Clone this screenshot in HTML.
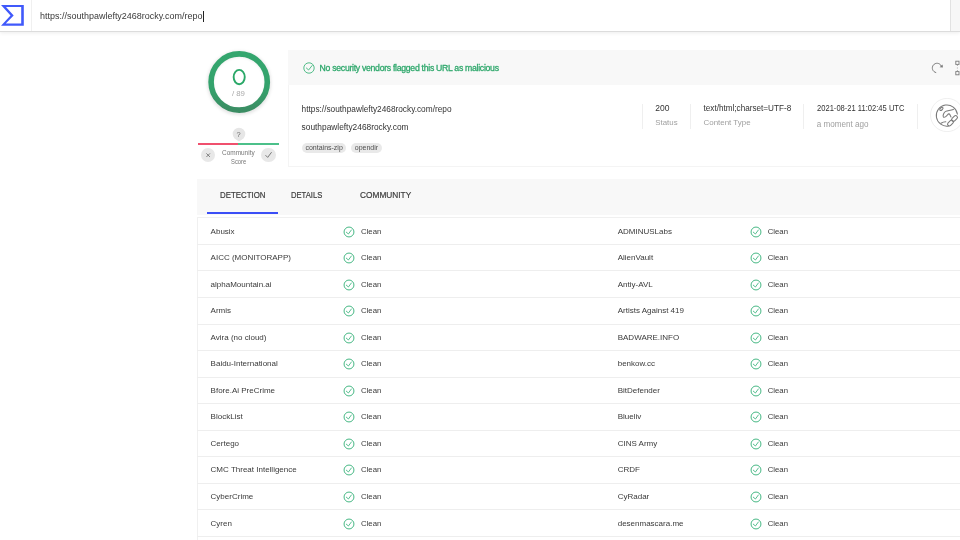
<!DOCTYPE html><html><head><meta charset="utf-8"><style>
html,body{margin:0;padding:0;width:960px;height:540px;overflow:hidden;background:#fff;}
body{position:relative;font-family:"Liberation Sans",sans-serif;}
#w{position:absolute;left:0;top:0;width:960px;height:540px;will-change:transform;background:#fff;}
.t{position:absolute;white-space:nowrap;}
.a{position:absolute;}
</style></head><body><div id="w">
<div class="a" style="left:0;top:0;width:960px;height:31px;background:#fff;border-bottom:1px solid #dcdcdc;box-shadow:0 1px 4px rgba(0,0,0,0.08);"></div>
<div class="a" style="left:31px;top:0;width:1px;height:31px;background:#f0f0f0;"></div>
<div class="a" style="left:950px;top:0;width:1px;height:31px;background:#e2e2e2;"></div>
<div class="a" style="left:951px;top:0;width:9px;height:31px;background:#f7f7f7;"></div>
<svg class="a" style="left:0;top:0" width="32" height="31" viewBox="0 0 32 31"><path fill="#4059fb" fill-rule="evenodd" d="M1 4.9 L23.8 4.9 L23.8 25.7 L1 25.7 L10.5 15.4 Z M6 7.1 L21.2 7.1 L21.2 23.5 L5.8 23.5 L13.7 15.4 Z"/></svg>
<div class="t" style="left:40.10px;top:12.00px;font-size:8.98px;line-height:8.98px;color:#3a3a3a;">https://southpawlefty2468rocky.com/repo</div>
<div class="a" style="left:203px;top:11px;width:1px;height:11px;background:#222;"></div>
<svg class="a" style="left:198.5px;top:41.5px" width="80" height="80" viewBox="0 0 80 80"><defs><linearGradient id="rg" x1="0" y1="0" x2="0" y2="1"><stop offset="0" stop-color="#34a66e"/><stop offset="0.6" stop-color="#34a26c"/><stop offset="1" stop-color="#3b8d63"/></linearGradient><filter id="sh" x="-20%" y="-20%" width="140%" height="140%"><feGaussianBlur stdDeviation="1.5"/></filter></defs><circle cx="40.2" cy="41" r="29" stroke="rgba(0,0,0,0.10)" stroke-width="6" fill="none" filter="url(#sh)"/><circle cx="40.2" cy="40" r="28.1" stroke="url(#rg)" stroke-width="5.6" fill="none"/><ellipse cx="40.2" cy="35.05" rx="5.55" ry="7.2" stroke="#2aa868" stroke-width="1.9" fill="none"/></svg>
<div class="t" style="left:138.40px;width:200px;text-align:center;top:90.00px;font-size:7.8px;line-height:7.8px;color:#aaaaaa;">/ 89</div>
<svg class="a" style="left:228.6px;top:124.1px" width="20" height="20" viewBox="0 0 20 20"><path d="M5.5 14.4 A6.3 6.3 0 1 1 14.5 14.4 L10 17.4 Z" fill="#e6e6e6"/></svg>
<div class="t" style="left:138.60px;width:200px;text-align:center;top:131.00px;font-size:7.5px;line-height:7.5px;color:#6a6a6a;">?</div>
<div class="a" style="left:197.8px;top:143.1px;width:40.3px;height:1.75px;background:#f0506e;"></div>
<div class="a" style="left:238.1px;top:143.1px;width:40.8px;height:1.75px;background:#4cc08a;"></div>
<div class="a" style="left:200.9px;top:148px;width:14.4px;height:14.4px;border-radius:50%;background:#e8e8e8;"></div>
<div class="a" style="left:261.4px;top:148px;width:14.4px;height:14.4px;border-radius:50%;background:#e8e8e8;"></div>
<svg class="a" style="left:200.9px;top:148px" width="14.4" height="14.4" viewBox="0 0 14.4 14.4"><path d="M5.4 5.4 L9 9 M9 5.4 L5.4 9" stroke="#666" stroke-width="0.8" fill="none"/></svg>
<svg class="a" style="left:261.4px;top:148px" width="14.4" height="14.4" viewBox="0 0 14.4 14.4"><path d="M4.5 7.2 L6.7 9.4 L10.6 4.2" stroke="#666" stroke-width="0.85" fill="none"/></svg>
<div class="t" style="left:222.00px;top:150.00px;font-size:6.6px;line-height:6.6px;color:#777;transform:scaleX(0.9798);transform-origin:0 0;">Community</div>
<div class="t" style="left:230.80px;top:159.00px;font-size:6.6px;line-height:6.6px;color:#777;transform:scaleX(0.8816);transform-origin:0 0;">Score</div>
<div class="a" style="left:288px;top:50px;width:680px;height:115px;background:#fff;border:1px solid #f4f4f4;"></div>
<div class="a" style="left:288px;top:50px;width:680px;height:34.5px;background:#f8f8f8;"></div>
<svg class="a" style="left:302.5px;top:62px" width="12" height="12" viewBox="0 0 12 12"><circle cx="6" cy="6" r="5.2" stroke="#3fb57c" stroke-width="0.9" fill="none"/><path d="M3.1 5.75 L5.6 8 L9.4 3.2" stroke="#3fb57c" stroke-width="0.9" fill="none"/></svg>
<div class="t" style="left:319.60px;top:64.00px;font-size:8.7px;line-height:8.7px;color:#2fa86c;letter-spacing:-0.29px;-webkit-text-stroke:0.3px #2fa86c">No security vendors flagged this URL as malicious</div>
<div class="t" style="left:301.60px;top:105.00px;font-size:8.29px;line-height:8.29px;color:#333;">https://southpawlefty2468rocky.com/repo</div>
<div class="t" style="left:301.60px;top:123.00px;font-size:8.35px;line-height:8.35px;color:#333;">southpawlefty2468rocky.com</div>
<div class="a" style="left:301.6px;top:142.8px;width:44.3px;height:9.8px;border-radius:5px;background:#e9e9e9;"></div>
<div class="a" style="left:351px;top:142.8px;width:30.9px;height:9.8px;border-radius:5px;background:#e9e9e9;"></div>
<div class="t" style="left:224.15px;width:200px;text-align:center;top:144.00px;font-size:7.0px;line-height:7.0px;color:#505050;">contains-zip</div>
<div class="t" style="left:266.45px;width:200px;text-align:center;top:144.00px;font-size:7.0px;line-height:7.0px;color:#505050;">opendir</div>
<div class="a" style="left:642.0px;top:104px;width:1px;height:24.5px;background:#efefef;"></div>
<div class="a" style="left:690.0px;top:104px;width:1px;height:24.5px;background:#efefef;"></div>
<div class="a" style="left:803.0px;top:104px;width:1px;height:24.5px;background:#efefef;"></div>
<div class="a" style="left:917.0px;top:104px;width:1px;height:24.5px;background:#efefef;"></div>
<div class="t" style="left:655.30px;top:104.00px;font-size:8.5px;line-height:8.5px;color:#333;">200</div>
<div class="t" style="left:655.30px;top:119.00px;font-size:7.87px;line-height:7.87px;color:#a0a0a0;">Status</div>
<div class="t" style="left:703.50px;top:105.00px;font-size:8.16px;line-height:8.16px;color:#333;">text/html;charset=UTF-8</div>
<div class="t" style="left:703.50px;top:119.00px;font-size:7.94px;line-height:7.94px;color:#a0a0a0;">Content Type</div>
<div class="t" style="left:816.70px;top:104.00px;font-size:8.8px;line-height:8.8px;color:#333;transform:scaleX(0.8613);transform-origin:0 0;">2021-08-21 11:02:45 UTC</div>
<div class="t" style="left:816.70px;top:121.00px;font-size:8.13px;line-height:8.13px;color:#a0a0a0;">a moment ago</div>
<svg class="a" style="left:926px;top:56px" width="34" height="26" viewBox="0 0 34 26"><path d="M10.2 16.6 A4.7 4.7 0 1 1 15.3 10" stroke="#7a7a7a" stroke-width="1" fill="none"/><path d="M13.6 11.2 L16.9 11.6 L16.6 8.4 Z" fill="#7a7a7a"/><rect x="29.8" y="5.2" width="3.2" height="3.2" stroke="#7a7a7a" stroke-width="0.9" fill="none"/><rect x="29.8" y="15.6" width="3.2" height="3.2" stroke="#7a7a7a" stroke-width="0.9" fill="none"/><path d="M31.4 9 V15" stroke="#999" stroke-width="0.8" stroke-dasharray="1 1.5"/></svg>
<svg class="a" style="left:930px;top:97.5px" width="34" height="34" viewBox="0 0 34 34"><circle cx="17.1" cy="17" r="16.6" stroke="#ebebeb" stroke-width="0.8" fill="#fff"/><g stroke="#7a7a7a" stroke-width="1.05" fill="none" stroke-linecap="round"><path d="M27.4 16.1 A10.6 10.6 0 1 0 18.7 28"/><path d="M23.4 11.4 C20 12.6 17.5 12.4 15.6 13.4 C13.6 14.6 12.6 17.8 13.4 19 C14.4 19.8 16.4 18.6 17.6 16.8 C18.4 15.6 19.4 15.6 19.8 16.6 L21 19"/><ellipse cx="11.4" cy="10.9" rx="1.9" ry="1.1" transform="rotate(-40 11.4 10.9)"/><path d="M11 25.3 C12.5 24.3 14 23.8 15.8 23.8"/><rect x="17.1" y="23.2" width="6.8" height="3.6" rx="1.8" transform="rotate(-45 20.5 25)"/><rect x="21.1" y="18.7" width="6.8" height="3.6" rx="1.8" transform="rotate(-45 24.5 20.5)"/></g></svg>
<div class="a" style="left:197.3px;top:178.5px;width:780px;height:36.3px;background:#f8f8f8;"></div>
<div class="t" style="left:219.75px;top:191.00px;font-size:9.1px;line-height:9.1px;color:#3c3c3c;-webkit-text-stroke:0.2px #3c3c3c;transform:scaleX(0.8654);transform-origin:0 0;">DETECTION</div>
<div class="t" style="left:290.50px;top:191.00px;font-size:9.1px;line-height:9.1px;color:#3c3c3c;-webkit-text-stroke:0.2px #3c3c3c;transform:scaleX(0.8388);transform-origin:0 0;">DETAILS</div>
<div class="t" style="left:359.75px;top:191.00px;font-size:9.1px;line-height:9.1px;color:#3c3c3c;-webkit-text-stroke:0.2px #3c3c3c;transform:scaleX(0.9134);transform-origin:0 0;">COMMUNITY</div>
<div class="a" style="left:206.75px;top:211.75px;width:71.25px;height:2.5px;background:#3b4ef6;"></div>
<div class="a" style="left:197.3px;top:217.20px;width:780px;height:330px;background:#fff;border-left:1px solid #f0f0f0;border-top:1px solid #f0f0f0;"></div>
<div class="a" style="left:197.3px;top:243.90px;width:780px;height:1px;background:#eeeeee;"></div>
<div class="t" style="left:210.60px;top:228.00px;font-size:8.0px;line-height:8.0px;color:#3a3a3a;">Abusix</div>
<svg class="a" style="left:343.40px;top:225.50px" width="12" height="12" viewBox="0 0 12 12"><circle cx="6" cy="6" r="4.95" stroke="#46b884" stroke-width="1" fill="none"/><path d="M3.0 5.9 L5.4 8.0 L8.6 3.7" stroke="#46b884" stroke-width="0.9" fill="none"/></svg>
<div class="t" style="left:361.00px;top:228.00px;font-size:7.78px;line-height:7.78px;color:#3a3a3a;">Clean</div>
<div class="t" style="left:617.70px;top:228.00px;font-size:8.0px;line-height:8.0px;color:#3a3a3a;">ADMINUSLabs</div>
<svg class="a" style="left:750.25px;top:225.50px" width="12" height="12" viewBox="0 0 12 12"><circle cx="6" cy="6" r="4.95" stroke="#46b884" stroke-width="1" fill="none"/><path d="M3.0 5.9 L5.4 8.0 L8.6 3.7" stroke="#46b884" stroke-width="0.9" fill="none"/></svg>
<div class="t" style="left:767.70px;top:228.00px;font-size:7.78px;line-height:7.78px;color:#3a3a3a;">Clean</div>
<div class="a" style="left:197.3px;top:270.45px;width:780px;height:1px;background:#eeeeee;"></div>
<div class="t" style="left:210.60px;top:254.00px;font-size:8.0px;line-height:8.0px;color:#3a3a3a;">AICC (MONITORAPP)</div>
<svg class="a" style="left:343.40px;top:252.05px" width="12" height="12" viewBox="0 0 12 12"><circle cx="6" cy="6" r="4.95" stroke="#46b884" stroke-width="1" fill="none"/><path d="M3.0 5.9 L5.4 8.0 L8.6 3.7" stroke="#46b884" stroke-width="0.9" fill="none"/></svg>
<div class="t" style="left:361.00px;top:254.00px;font-size:7.78px;line-height:7.78px;color:#3a3a3a;">Clean</div>
<div class="t" style="left:617.70px;top:254.00px;font-size:8.0px;line-height:8.0px;color:#3a3a3a;">AlienVault</div>
<svg class="a" style="left:750.25px;top:252.05px" width="12" height="12" viewBox="0 0 12 12"><circle cx="6" cy="6" r="4.95" stroke="#46b884" stroke-width="1" fill="none"/><path d="M3.0 5.9 L5.4 8.0 L8.6 3.7" stroke="#46b884" stroke-width="0.9" fill="none"/></svg>
<div class="t" style="left:767.70px;top:254.00px;font-size:7.78px;line-height:7.78px;color:#3a3a3a;">Clean</div>
<div class="a" style="left:197.3px;top:297.00px;width:780px;height:1px;background:#eeeeee;"></div>
<div class="t" style="left:210.60px;top:281.00px;font-size:8.0px;line-height:8.0px;color:#3a3a3a;">alphaMountain.ai</div>
<svg class="a" style="left:343.40px;top:278.60px" width="12" height="12" viewBox="0 0 12 12"><circle cx="6" cy="6" r="4.95" stroke="#46b884" stroke-width="1" fill="none"/><path d="M3.0 5.9 L5.4 8.0 L8.6 3.7" stroke="#46b884" stroke-width="0.9" fill="none"/></svg>
<div class="t" style="left:361.00px;top:281.00px;font-size:7.78px;line-height:7.78px;color:#3a3a3a;">Clean</div>
<div class="t" style="left:617.70px;top:281.00px;font-size:8.0px;line-height:8.0px;color:#3a3a3a;">Antiy-AVL</div>
<svg class="a" style="left:750.25px;top:278.60px" width="12" height="12" viewBox="0 0 12 12"><circle cx="6" cy="6" r="4.95" stroke="#46b884" stroke-width="1" fill="none"/><path d="M3.0 5.9 L5.4 8.0 L8.6 3.7" stroke="#46b884" stroke-width="0.9" fill="none"/></svg>
<div class="t" style="left:767.70px;top:281.00px;font-size:7.78px;line-height:7.78px;color:#3a3a3a;">Clean</div>
<div class="a" style="left:197.3px;top:323.55px;width:780px;height:1px;background:#eeeeee;"></div>
<div class="t" style="left:210.60px;top:307.00px;font-size:8.0px;line-height:8.0px;color:#3a3a3a;">Armis</div>
<svg class="a" style="left:343.40px;top:305.15px" width="12" height="12" viewBox="0 0 12 12"><circle cx="6" cy="6" r="4.95" stroke="#46b884" stroke-width="1" fill="none"/><path d="M3.0 5.9 L5.4 8.0 L8.6 3.7" stroke="#46b884" stroke-width="0.9" fill="none"/></svg>
<div class="t" style="left:361.00px;top:307.00px;font-size:7.78px;line-height:7.78px;color:#3a3a3a;">Clean</div>
<div class="t" style="left:617.70px;top:307.00px;font-size:8.0px;line-height:8.0px;color:#3a3a3a;">Artists Against 419</div>
<svg class="a" style="left:750.25px;top:305.15px" width="12" height="12" viewBox="0 0 12 12"><circle cx="6" cy="6" r="4.95" stroke="#46b884" stroke-width="1" fill="none"/><path d="M3.0 5.9 L5.4 8.0 L8.6 3.7" stroke="#46b884" stroke-width="0.9" fill="none"/></svg>
<div class="t" style="left:767.70px;top:307.00px;font-size:7.78px;line-height:7.78px;color:#3a3a3a;">Clean</div>
<div class="a" style="left:197.3px;top:350.10px;width:780px;height:1px;background:#eeeeee;"></div>
<div class="t" style="left:210.60px;top:334.00px;font-size:8.0px;line-height:8.0px;color:#3a3a3a;">Avira (no cloud)</div>
<svg class="a" style="left:343.40px;top:331.70px" width="12" height="12" viewBox="0 0 12 12"><circle cx="6" cy="6" r="4.95" stroke="#46b884" stroke-width="1" fill="none"/><path d="M3.0 5.9 L5.4 8.0 L8.6 3.7" stroke="#46b884" stroke-width="0.9" fill="none"/></svg>
<div class="t" style="left:361.00px;top:334.00px;font-size:7.78px;line-height:7.78px;color:#3a3a3a;">Clean</div>
<div class="t" style="left:617.70px;top:334.00px;font-size:8.0px;line-height:8.0px;color:#3a3a3a;">BADWARE.INFO</div>
<svg class="a" style="left:750.25px;top:331.70px" width="12" height="12" viewBox="0 0 12 12"><circle cx="6" cy="6" r="4.95" stroke="#46b884" stroke-width="1" fill="none"/><path d="M3.0 5.9 L5.4 8.0 L8.6 3.7" stroke="#46b884" stroke-width="0.9" fill="none"/></svg>
<div class="t" style="left:767.70px;top:334.00px;font-size:7.78px;line-height:7.78px;color:#3a3a3a;">Clean</div>
<div class="a" style="left:197.3px;top:376.65px;width:780px;height:1px;background:#eeeeee;"></div>
<div class="t" style="left:210.60px;top:360.00px;font-size:8.0px;line-height:8.0px;color:#3a3a3a;">Baidu-International</div>
<svg class="a" style="left:343.40px;top:358.25px" width="12" height="12" viewBox="0 0 12 12"><circle cx="6" cy="6" r="4.95" stroke="#46b884" stroke-width="1" fill="none"/><path d="M3.0 5.9 L5.4 8.0 L8.6 3.7" stroke="#46b884" stroke-width="0.9" fill="none"/></svg>
<div class="t" style="left:361.00px;top:360.00px;font-size:7.78px;line-height:7.78px;color:#3a3a3a;">Clean</div>
<div class="t" style="left:617.70px;top:360.00px;font-size:8.0px;line-height:8.0px;color:#3a3a3a;">benkow.cc</div>
<svg class="a" style="left:750.25px;top:358.25px" width="12" height="12" viewBox="0 0 12 12"><circle cx="6" cy="6" r="4.95" stroke="#46b884" stroke-width="1" fill="none"/><path d="M3.0 5.9 L5.4 8.0 L8.6 3.7" stroke="#46b884" stroke-width="0.9" fill="none"/></svg>
<div class="t" style="left:767.70px;top:360.00px;font-size:7.78px;line-height:7.78px;color:#3a3a3a;">Clean</div>
<div class="a" style="left:197.3px;top:403.20px;width:780px;height:1px;background:#eeeeee;"></div>
<div class="t" style="left:210.60px;top:387.00px;font-size:8.0px;line-height:8.0px;color:#3a3a3a;">Bfore.Ai PreCrime</div>
<svg class="a" style="left:343.40px;top:384.80px" width="12" height="12" viewBox="0 0 12 12"><circle cx="6" cy="6" r="4.95" stroke="#46b884" stroke-width="1" fill="none"/><path d="M3.0 5.9 L5.4 8.0 L8.6 3.7" stroke="#46b884" stroke-width="0.9" fill="none"/></svg>
<div class="t" style="left:361.00px;top:387.00px;font-size:7.78px;line-height:7.78px;color:#3a3a3a;">Clean</div>
<div class="t" style="left:617.70px;top:387.00px;font-size:8.0px;line-height:8.0px;color:#3a3a3a;">BitDefender</div>
<svg class="a" style="left:750.25px;top:384.80px" width="12" height="12" viewBox="0 0 12 12"><circle cx="6" cy="6" r="4.95" stroke="#46b884" stroke-width="1" fill="none"/><path d="M3.0 5.9 L5.4 8.0 L8.6 3.7" stroke="#46b884" stroke-width="0.9" fill="none"/></svg>
<div class="t" style="left:767.70px;top:387.00px;font-size:7.78px;line-height:7.78px;color:#3a3a3a;">Clean</div>
<div class="a" style="left:197.3px;top:429.75px;width:780px;height:1px;background:#eeeeee;"></div>
<div class="t" style="left:210.60px;top:413.00px;font-size:8.0px;line-height:8.0px;color:#3a3a3a;">BlockList</div>
<svg class="a" style="left:343.40px;top:411.35px" width="12" height="12" viewBox="0 0 12 12"><circle cx="6" cy="6" r="4.95" stroke="#46b884" stroke-width="1" fill="none"/><path d="M3.0 5.9 L5.4 8.0 L8.6 3.7" stroke="#46b884" stroke-width="0.9" fill="none"/></svg>
<div class="t" style="left:361.00px;top:413.00px;font-size:7.78px;line-height:7.78px;color:#3a3a3a;">Clean</div>
<div class="t" style="left:617.70px;top:413.00px;font-size:8.0px;line-height:8.0px;color:#3a3a3a;">Blueliv</div>
<svg class="a" style="left:750.25px;top:411.35px" width="12" height="12" viewBox="0 0 12 12"><circle cx="6" cy="6" r="4.95" stroke="#46b884" stroke-width="1" fill="none"/><path d="M3.0 5.9 L5.4 8.0 L8.6 3.7" stroke="#46b884" stroke-width="0.9" fill="none"/></svg>
<div class="t" style="left:767.70px;top:413.00px;font-size:7.78px;line-height:7.78px;color:#3a3a3a;">Clean</div>
<div class="a" style="left:197.3px;top:456.30px;width:780px;height:1px;background:#eeeeee;"></div>
<div class="t" style="left:210.60px;top:440.00px;font-size:8.0px;line-height:8.0px;color:#3a3a3a;">Certego</div>
<svg class="a" style="left:343.40px;top:437.90px" width="12" height="12" viewBox="0 0 12 12"><circle cx="6" cy="6" r="4.95" stroke="#46b884" stroke-width="1" fill="none"/><path d="M3.0 5.9 L5.4 8.0 L8.6 3.7" stroke="#46b884" stroke-width="0.9" fill="none"/></svg>
<div class="t" style="left:361.00px;top:440.00px;font-size:7.78px;line-height:7.78px;color:#3a3a3a;">Clean</div>
<div class="t" style="left:617.70px;top:440.00px;font-size:8.0px;line-height:8.0px;color:#3a3a3a;">CINS Army</div>
<svg class="a" style="left:750.25px;top:437.90px" width="12" height="12" viewBox="0 0 12 12"><circle cx="6" cy="6" r="4.95" stroke="#46b884" stroke-width="1" fill="none"/><path d="M3.0 5.9 L5.4 8.0 L8.6 3.7" stroke="#46b884" stroke-width="0.9" fill="none"/></svg>
<div class="t" style="left:767.70px;top:440.00px;font-size:7.78px;line-height:7.78px;color:#3a3a3a;">Clean</div>
<div class="a" style="left:197.3px;top:482.85px;width:780px;height:1px;background:#eeeeee;"></div>
<div class="t" style="left:210.60px;top:466.00px;font-size:8.0px;line-height:8.0px;color:#3a3a3a;">CMC Threat Intelligence</div>
<svg class="a" style="left:343.40px;top:464.45px" width="12" height="12" viewBox="0 0 12 12"><circle cx="6" cy="6" r="4.95" stroke="#46b884" stroke-width="1" fill="none"/><path d="M3.0 5.9 L5.4 8.0 L8.6 3.7" stroke="#46b884" stroke-width="0.9" fill="none"/></svg>
<div class="t" style="left:361.00px;top:466.00px;font-size:7.78px;line-height:7.78px;color:#3a3a3a;">Clean</div>
<div class="t" style="left:617.70px;top:466.00px;font-size:8.0px;line-height:8.0px;color:#3a3a3a;">CRDF</div>
<svg class="a" style="left:750.25px;top:464.45px" width="12" height="12" viewBox="0 0 12 12"><circle cx="6" cy="6" r="4.95" stroke="#46b884" stroke-width="1" fill="none"/><path d="M3.0 5.9 L5.4 8.0 L8.6 3.7" stroke="#46b884" stroke-width="0.9" fill="none"/></svg>
<div class="t" style="left:767.70px;top:466.00px;font-size:7.78px;line-height:7.78px;color:#3a3a3a;">Clean</div>
<div class="a" style="left:197.3px;top:509.40px;width:780px;height:1px;background:#eeeeee;"></div>
<div class="t" style="left:210.60px;top:493.00px;font-size:8.0px;line-height:8.0px;color:#3a3a3a;">CyberCrime</div>
<svg class="a" style="left:343.40px;top:491.00px" width="12" height="12" viewBox="0 0 12 12"><circle cx="6" cy="6" r="4.95" stroke="#46b884" stroke-width="1" fill="none"/><path d="M3.0 5.9 L5.4 8.0 L8.6 3.7" stroke="#46b884" stroke-width="0.9" fill="none"/></svg>
<div class="t" style="left:361.00px;top:493.00px;font-size:7.78px;line-height:7.78px;color:#3a3a3a;">Clean</div>
<div class="t" style="left:617.70px;top:493.00px;font-size:8.0px;line-height:8.0px;color:#3a3a3a;">CyRadar</div>
<svg class="a" style="left:750.25px;top:491.00px" width="12" height="12" viewBox="0 0 12 12"><circle cx="6" cy="6" r="4.95" stroke="#46b884" stroke-width="1" fill="none"/><path d="M3.0 5.9 L5.4 8.0 L8.6 3.7" stroke="#46b884" stroke-width="0.9" fill="none"/></svg>
<div class="t" style="left:767.70px;top:493.00px;font-size:7.78px;line-height:7.78px;color:#3a3a3a;">Clean</div>
<div class="a" style="left:197.3px;top:535.95px;width:780px;height:1px;background:#eeeeee;"></div>
<div class="t" style="left:210.60px;top:520.00px;font-size:8.0px;line-height:8.0px;color:#3a3a3a;">Cyren</div>
<svg class="a" style="left:343.40px;top:517.55px" width="12" height="12" viewBox="0 0 12 12"><circle cx="6" cy="6" r="4.95" stroke="#46b884" stroke-width="1" fill="none"/><path d="M3.0 5.9 L5.4 8.0 L8.6 3.7" stroke="#46b884" stroke-width="0.9" fill="none"/></svg>
<div class="t" style="left:361.00px;top:520.00px;font-size:7.78px;line-height:7.78px;color:#3a3a3a;">Clean</div>
<div class="t" style="left:617.70px;top:520.00px;font-size:8.0px;line-height:8.0px;color:#3a3a3a;">desenmascara.me</div>
<svg class="a" style="left:750.25px;top:517.55px" width="12" height="12" viewBox="0 0 12 12"><circle cx="6" cy="6" r="4.95" stroke="#46b884" stroke-width="1" fill="none"/><path d="M3.0 5.9 L5.4 8.0 L8.6 3.7" stroke="#46b884" stroke-width="0.9" fill="none"/></svg>
<div class="t" style="left:767.70px;top:520.00px;font-size:7.78px;line-height:7.78px;color:#3a3a3a;">Clean</div>
</div></body></html>
